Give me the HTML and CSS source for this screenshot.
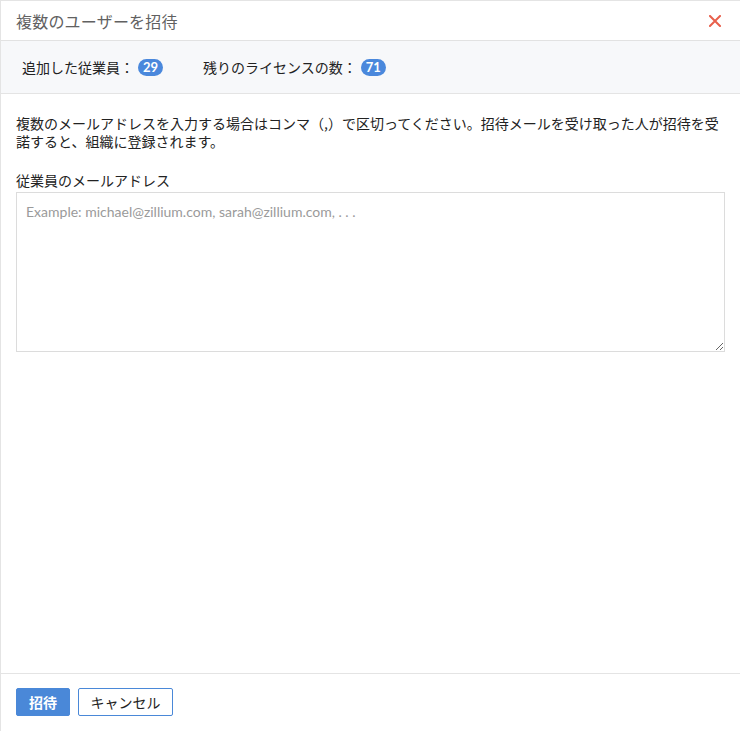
FILE: index.html
```html
<!DOCTYPE html>
<html lang="ja">
<head>
<meta charset="utf-8">
<title>複数のユーザーを招待</title>
<link rel="stylesheet" href="styles.css">
</head>
<body>
<div class="dialog">
  <div class="header">
    <h1 class="title">複数のユーザーを招待</h1>
    <svg class="close" width="12" height="12" viewBox="0 0 12 12" aria-label="閉じる">
      <path d="M1 1 L11 11 M11 1 L1 11" stroke="#e8604c" stroke-width="2" stroke-linecap="square" fill="none"/>
    </svg>
  </div>
  <div class="stats">
    <div class="stat">追加した従業員：<span class="badge">29</span></div>
    <div class="stat">残りのライセンスの数：<span class="badge">71</span></div>
  </div>
  <div class="body">
    <p class="desc">複数のメールアドレスを入力する場合はコンマ（,）で区切ってください。招待メールを受け取った人が招待を受諾すると、組織に登録されます。</p>
    <label class="label" for="emails">従業員のメールアドレス</label>
    <textarea id="emails" class="input" placeholder="Example: michael@zillium.com, sarah@zillium.com, . . ."></textarea>
  </div>
  <div class="footer">
    <button class="btn primary">招待</button>
    <button class="btn secondary">キャンセル</button>
  </div>
</div>
</body>
</html>
```
FILE: styles.css
```css
html, body {
  margin: 0;
  padding: 0;
  height: 100%;
  background: #fff;
}
body {
  font-family: "Noto Sans CJK JP", "Noto Sans", sans-serif;
  color: #222;
}
.dialog {
  box-sizing: border-box;
  height: 731px;
  border-left: 1px solid #e4e4e4;
  border-top: 1px solid #e4e4e4;
  display: flex;
  flex-direction: column;
}
.header {
  height: 39px;
  border-bottom: 1px solid #e2e2e2;
  display: flex;
  align-items: center;
  justify-content: space-between;
  padding: 0 19px 0 15px;
}
.title {
  margin: 0;
  font-size: 16px;
  font-weight: 400;
  color: #616161;
  letter-spacing: 0.2px;
}
.close {
  display: block;
  margin-top: 1px;
}
.stats {
  height: 52px;
  background: #f7f8fa;
  border-bottom: 1px solid #e4e4e4;
  display: flex;
  align-items: center;
  padding-left: 21px;
  gap: 40px;
  font-size: 14px;
}
.stat {
  display: flex;
  align-items: center;
}
.badge {
  display: inline-block;
  background: #4a88dc;
  color: #fff;
  font-family: "Lato", sans-serif;
  font-weight: 700;
  font-size: 13px;
  line-height: 17px;
  height: 17px;
  padding: 0 5px;
  border-radius: 9px;
  margin-left: 4px;
}
.body {
  flex: 1;
  padding: 20px 15px 0 15px;
}
.desc {
  margin: 0;
  font-size: 14px;
  line-height: 18px;
  color: #222;
}
.label {
  display: block;
  margin-top: 20px;
  font-size: 14px;
  line-height: 20px;
}
.input {
  display: block;
  box-sizing: border-box;
  width: 100%;
  height: 160px;
  margin-top: 2px;
  border: 1px solid #dcdcdc;
  border-radius: 0;
  padding: 9px 9px;
  font-family: "Lato", sans-serif;
  font-size: 14px;
  line-height: 20px;
  resize: vertical;
  outline: none;
}
.input::placeholder {
  color: #9a9a9a;
}
.footer {
  height: 57px;
  border-top: 1px solid #e4e4e4;
  display: flex;
  align-items: center;
  padding: 0 15px;
  gap: 8px;
}
.btn {
  box-sizing: border-box;
  height: 28px;
  font-family: "Noto Sans CJK JP", sans-serif;
  font-size: 14px;
  border-radius: 2px;
  cursor: pointer;
  line-height: 1;
  margin-top: -1px;
}
.primary {
  width: 54px;
  background: #4a88d8;
  border: 1px solid #4a88d8;
  color: #fff;
  font-weight: 700;
}
.secondary {
  width: 95px;
  background: #fff;
  border: 1px solid #4a88d8;
  color: #222;
}
```
